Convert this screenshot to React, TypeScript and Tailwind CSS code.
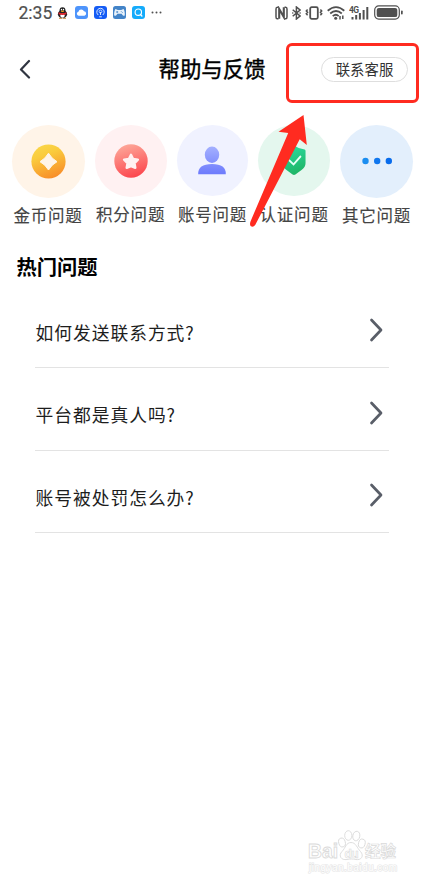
import React from "react";

const cjk = "font-['Noto_Sans_CJK_SC',sans-serif]";

function StatusBar() {
  return (
    <header className="flex h-[26px] items-center pl-[18px] pr-[21px] text-[#505050]">
      <span className="mb-px w-[34px] pl-[0.5px] font-[Roboto,sans-serif] text-[17.5px] leading-[26px] [-webkit-text-stroke:0.2px_#505050]">2:35</span>
      <svg className="ml-[5px] h-[12px] w-[11px]" viewBox="0 0 11 12">
        <ellipse cx="5.5" cy="7.2" rx="4.6" ry="4" fill="#222" />
        <ellipse cx="5.5" cy="3.6" rx="3" ry="3.4" fill="#222" />
        <ellipse cx="5.5" cy="8.6" rx="2.2" ry="2.2" fill="#fff" />
        <path d="M1.6 5.3Q5.5 7.3 9.4 5.3V7.2Q5.5 8.8 1.6 7.2Z" fill="#e4232c" />
        <ellipse cx="4.5" cy="2.6" rx=".7" ry=".9" fill="#fff" />
        <ellipse cx="6.5" cy="2.6" rx=".7" ry=".9" fill="#fff" />
        <ellipse cx="5.5" cy="4.3" rx="1.6" ry=".7" fill="#f5a623" />
        <path d="M2 11.3h3M6 11.3h3" stroke="#c98a3c" strokeWidth="1" />
      </svg>
      <svg className="mb-px ml-[7px] h-[13px] w-[13px]" viewBox="0 0 13 13">
        <rect width="13" height="13" rx="3" fill="#4e94fb" />
        <path d="M3.6 9.8a2.1 2.1 0 0 1-.2-4.1 3 3 0 0 1 5.600-.4 2.300 2.300 0 0 1 .5 4.500z" fill="#fff" />
      </svg>
      <svg className="mb-px ml-[5.5px] h-[13px] w-[13px]" viewBox="0 0 13 13">
        <rect width="13" height="13" rx="3" fill="#155cf5" />
        <path d="M4.300 9A3.700 3.700 0 1 1 8.700 9M6.500 9V6M5.200 10.800h2.600" fill="none" stroke="#dceaff" strokeWidth="1" />
        <circle cx="6.500" cy="5.500" r="1.400" fill="none" stroke="#dceaff" strokeWidth=".8" />
      </svg>
      <svg className="mb-px ml-[6px] h-[13px] w-[13px]" viewBox="0 0 13 13">
        <rect width="13" height="13" rx="2.500" fill="#4384c8" />
        <path d="M2.600 3l2.200 1h3.400l2.200-1c1 .5 1.800 5 1.300 6.400-.9 1.200-2.300-.5-3.100-1.700H4.400C3.600 8.900 2.200 10.600 1.300 9.400c-.5-1.400.3-5.900 1.300-6.400z" fill="#e7f1fa" />
        <path d="M3.200 6h2M4.200 5v2M7.800 5.500h.8M8.900 6.500h.8" stroke="#4384c8" strokeWidth=".8" />
      </svg>
      <svg className="mb-px ml-[6px] h-[13px] w-[13px]" viewBox="0 0 13 13">
        <rect width="13" height="13" rx="3" fill="#14abfb" />
        <circle cx="6.300" cy="6.200" r="3.200" fill="none" stroke="#fff" strokeWidth="1.100" />
        <path d="M8 8l2.300 2.500" stroke="#fff" strokeWidth="1.200" />
      </svg>
      <svg className="mb-px ml-[6px] h-[3px] w-[12px]" viewBox="0 0 12 3" fill="currentColor">
        <circle cx="1.500" cy="1.500" r="1" /><circle cx="5.500" cy="1.500" r="1" /><circle cx="9.500" cy="1.500" r="1" />
      </svg>
      <div className="mb-px ml-auto flex items-center pr-px">
        <svg className="h-[14px] w-[13px]" viewBox="0 0 13 14" fill="none" stroke="currentColor">
          <path d="M3.500 1.200H2.300Q1 1.200 1 3v8q0 1.800 1.300 1.800h1.200M9.500 1.200h1.200Q12 1.200 12 3v8q0 1.800-1.300 1.800H9.500" strokeWidth="1.500" />
          <path d="M4.200 12.800V3l4.600 8V1.200" strokeWidth="2.100" />
        </svg>
        <svg className="ml-[4px] h-[14px] w-[9px]" viewBox="0 0 9 14" fill="none" stroke="currentColor" strokeWidth="1.500">
          <path d="M.7 3.800L8 10 4.400 13V1L8 4 .7 10.200" />
          <path d="M.2 7h1.100M7.500 7h1.200" strokeWidth="1.300" />
        </svg>
        <svg className="ml-[4px] h-[14px] w-[18px]" viewBox="0 0 18 14" fill="none" stroke="currentColor">
          <rect x="5.200" y="1.200" width="7.600" height="11.600" rx="1.500" strokeWidth="1.800" />
          <path d="M2.600 3.500L1.300 5l1.300 1.300L1.300 7.800l1.300 1.400M15.400 3.500L16.700 5l-1.300 1.300 1.300 1.500-1.300 1.400" strokeWidth="1.500" />
        </svg>
        <svg className="ml-[4px] h-[14px] w-[18px]" viewBox="0 0 18 14" fill="none" stroke="currentColor" strokeWidth="1.800">
          <path d="M.7 4.700Q9-2.500 17.300 4.700M3.200 7.500q5.800-5 11.600 0M5.700 10.100q3.300-2.700 6 0" />
          <circle cx="8.700" cy="12.200" r="1.500" fill="currentColor" stroke="none" />
          <path d="M13 10v3.500M15.800 9.500v3.500" strokeWidth="1.500" />
        </svg>
        <svg className="ml-[4px] h-[16px] w-[20px]" viewBox="0 0 20 16" fill="currentColor">
          <text x="0" y="8" fontFamily="Roboto,sans-serif" fontSize="8.500" fontWeight="700" textLength="10">4G</text>
          <rect x="2.500" y="12" width="2" height="2.500" /><rect x="6.200" y="10" width="2" height="4.500" /><rect x="9.900" y="8" width="2" height="6.500" /><rect x="13.600" y="5" width="2" height="9.500" /><rect x="17.300" y="2" width="2" height="12.500" />
        </svg>
        <svg className="ml-[5px] h-[15px] w-[29px]" viewBox="0 0 29 15">
          <rect x=".7" y=".9" width="24.600" height="13.200" rx="4" fill="none" stroke="currentColor" strokeWidth="1.200" />
          <rect x="2.700" y="2.900" width="20.600" height="9.200" rx="2.200" fill="currentColor" />
          <rect x="27" y="5.500" width="1.700" height="4" rx=".8" fill="currentColor" />
        </svg>
      </div>
    </header>
  );
}

function CoinIcon() {
  return (
    <svg className="h-[35px] w-[35px]" viewBox="0 0 35 35">
      <defs><linearGradient id="coin" x1=".3" y1="0" x2=".7" y2="1"><stop stopColor="#fad648" /><stop offset=".3" stopColor="#facb3c" /><stop offset="1" stopColor="#f88a28" /></linearGradient></defs>
      <circle cx="17.500" cy="17.500" r="17.100" fill="url(#coin)" />
      <path d="M17.500 9.200Q20.500 14.500 26 17.700 20.500 20.700 17.500 26 14.500 20.700 9 17.700 14.500 14.500 17.500 9.200Z" fill="#fff4e7" stroke="#fff4e7" strokeLinejoin="round" />
    </svg>
  );
}

function PointsIcon() {
  return (
    <svg className="h-[34px] w-[34px]" viewBox="0 0 34 34">
      <defs><linearGradient id="points" x1=".35" y1="0" x2=".65" y2="1"><stop stopColor="#fda698" /><stop offset="1" stopColor="#fc444c" /></linearGradient></defs>
      <circle cx="17" cy="17" r="16.700" fill="url(#points)" />
      <path d="M17 10.800l2.100 4.200 4.800.7-3.400 3.500.8 4.600-4.300-1.600-4.300 1.600.8-4.600-3.400-3.500 4.800-.7z" fill="#fff0f0" stroke="#fff0f0" strokeWidth="2.400" strokeLinejoin="round" />
    </svg>
  );
}

function AccountIcon() {
  return (
    <svg className="mr-px h-[30px] w-[30px]" viewBox="0 0 30 30">
      <defs><linearGradient id="account" x1="0" y1="0" x2="0" y2="30" gradientUnits="userSpaceOnUse"><stop stopColor="#a7b3ff" /><stop offset="1" stopColor="#6b79fc" /></linearGradient></defs>
      <ellipse cx="15" cy="9.800" rx="7.200" ry="8.200" fill="url(#account)" />
      <path d="M1.200 29.300Q.8 19.100 15 19.100T28.800 29.300Z" fill="url(#account)" />
    </svg>
  );
}

function ShieldIcon() {
  return (
    <svg className="h-[32px] w-[24px]" viewBox="0 0 26 32" preserveAspectRatio="none">
      <defs><linearGradient id="shield" x1=".3" y1="0" x2=".6" y2="1"><stop stopColor="#29dba0" /><stop offset="1" stopColor="#1fb464" /></linearGradient></defs>
      <path d="M13 1.500Q18 4.800 24.500 5.500 25.500 5.700 25.500 7v12q0 4-4 6.800L14.500 30.500q-1.500.8-3 0L4.500 25.800Q.5 23 .5 19V7q0-1.300 1-1.500Q8 4.800 13 1.500Z" fill="url(#shield)" />
      <path d="M7.500 16l5 4.500 8-8.500" fill="none" stroke="#e7fff5" strokeWidth="1.900" />
    </svg>
  );
}

function MoreIcon() {
  return (
    <svg className="h-[8px] w-[32px]" viewBox="0 0 32 8">
      <circle cx="4.500" cy="4" r="3.200" fill="#1b8df0" /><circle cx="16.200" cy="4" r="3.200" fill="#1177ee" /><circle cx="27.800" cy="4" r="3.200" fill="#086cec" />
    </svg>
  );
}

const categories = [
  { label: "金币问题", size: "h-[73px] w-[73px] bg-[#fff4e8]", Icon: CoinIcon },
  { label: "积分问题", size: "h-[72px] w-[72px] bg-[#fff1f2]", Icon: PointsIcon },
  { label: "账号问题", size: "h-[71.5px] w-[71.5px] bg-[#f0f2ff]", Icon: AccountIcon },
  { label: "认证问题", size: "h-[71.5px] w-[71.5px] bg-[#e4f7ee]", Icon: ShieldIcon },
  { label: "其它问题", size: "h-[73px] w-[73px] bg-[#e3effc]", Icon: MoreIcon },
];

const questions = ["如何发送联系方式?", "平台都是真人吗?", "账号被处罚怎么办?"];

function Watermark() {
  return (
    <svg className="h-[48px] w-[96px]" viewBox="0 0 96 48" fill="#fff" stroke="#dadada" strokeWidth=".9">
      <text x="3" y="28" fontFamily="Liberation Sans,sans-serif" fontWeight="700" fontSize="21" textLength="30" lengthAdjust="spacingAndGlyphs">Bai</text>
      <ellipse cx="37" cy="12.500" rx="3.300" ry="4.500" transform="rotate(-15 37 12.500)" />
      <ellipse cx="43.300" cy="5.500" rx="3.600" ry="4.800" />
      <ellipse cx="51.300" cy="6" rx="3.500" ry="4.800" transform="rotate(12 51.300 6)" />
      <ellipse cx="56.800" cy="13.500" rx="3.300" ry="4.500" transform="rotate(15 56.800 13.500)" />
      <path d="M46 12.500c5 0 6 5.500 9.500 9 4 4.500.5 9-4.500 8-3-.7-6-.7-9 0-6 1-9-4-5-8 3.500-3.500 4-9 9-9z" />
      <text x="39.500" y="27.500" fontFamily="Liberation Sans,sans-serif" fontWeight="700" fontSize="12" strokeWidth=".6" textLength="14">du</text>
      <text x="60" y="26.900" fontFamily="Noto Sans CJK SC,sans-serif" fontWeight="700" fontSize="15.500" strokeWidth=".7">经验</text>
      <text x="4" y="40.700" fontFamily="Liberation Sans,sans-serif" fontSize="10" stroke="#e5e5e5" strokeWidth="1.200" paintOrder="stroke" textLength="88">jingyan.baidu.com</text>
    </svg>
  );
}

export default function App() {
  return (
    <div className={`relative flex h-[884px] w-[425px] flex-col overflow-hidden bg-white ${cjk}`}>
      <StatusBar />
      <div className="grid h-[86px] grid-cols-[1fr_auto_1fr] items-center pl-[18px] pr-[17px]">
        <button aria-label="返回" className="justify-self-start">
          <svg className="h-[20px] w-[14px]" viewBox="0 0 14 20" fill="none" stroke="#303541" strokeWidth="2.200" strokeLinecap="round" strokeLinejoin="round"><path d="M11 2L3 10.500 11 18.500" /></svg>
        </button>
        <h1 className="-ml-[2px] mb-[2px] text-[21.4px] leading-[30px] text-black [-webkit-text-stroke:0.4px_black]">帮助与反馈</h1>
        <button className="flex h-[25px] w-[87px] items-center justify-center justify-self-end rounded-full border border-[#dedede] pb-px text-[14.4px] text-[#333]">联系客服</button>
      </div>
      <nav className="mt-[12.5px] flex h-[110px] justify-between pl-[11.5px] pr-[12px]">
        {categories.map(({ label, size, Icon }) => (
          <button key={label} className="flex flex-col items-center">
            <span className={`flex items-center justify-center rounded-full ${size}`}><Icon /></span>
            <span className="-mx-1 mt-[5.5px] whitespace-nowrap text-[16.5px] leading-[24px] tracking-[0.8px] text-[#444] [-webkit-text-stroke:0.15px_#444]">{label}</span>
          </button>
        ))}
      </nav>
      <h2 className="mt-[16px] pl-[16.5px] text-[20.3px] font-bold leading-[30px] text-black">热门问题</h2>
      <ul className="mt-[5px] pl-[35px] pr-[36px]">
        {questions.map((q) => (
          <li key={q} className="flex h-[82.5px] items-center justify-between border-b border-[#e3e3e3] pr-[5px] pt-[12px]">
            <span className="pl-[0.5px] text-[17.8px] tracking-[0.95px] text-[#1d1d1d]">{q}</span>
            <svg className="mb-[4px] h-[26px] w-[16px]" viewBox="0 0 16 26" fill="none" stroke="#595e68" strokeWidth="2.700" strokeLinecap="round" strokeLinejoin="round"><path d="M3.500 3L13 13 3.500 23" /></svg>
          </li>
        ))}
      </ul>
      <footer className="mb-[6px] mr-[24px] mt-auto flex justify-end"><Watermark /></footer>
      <div className="pointer-events-none absolute left-[286px] top-[43px] h-[60px] w-[133px] rounded-[6px] border-[3px] border-[#ff2b20]" />
      <svg className="pointer-events-none absolute left-[240px] top-[110px] h-[125px] w-[80px]" viewBox="240 110 80 125">
        <path d="M303.500 115L306.800 145 299.700 139.200 255.200 225Q253 228 250.600 226 249.500 224.500 250.500 221.500L288.200 133 278.500 131.700Z" fill="#ff2b20" />
      </svg>
    </div>
  );
}
